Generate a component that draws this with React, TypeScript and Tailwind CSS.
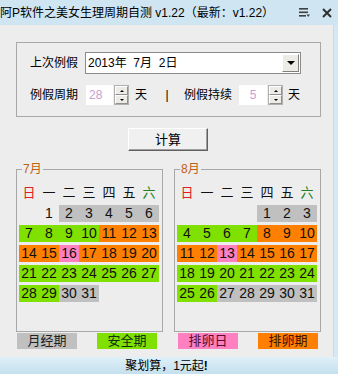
import React from "react";

type C = "" | "g" | "s" | "p" | "o";
const bg: Record<C, string> = {
  "": "",
  g: "bg-[#c0c0c0]",
  s: "bg-[#80e000]",
  p: "bg-[#ff80c0]",
  o: "bg-[#ff8000]",
};

function colorJuly(d: number): C {
  if (d === 1) return "";
  if (d <= 6) return "g";
  if (d <= 10) return "s";
  if (d === 16) return "p";
  if (d <= 20) return "o";
  if (d <= 29) return "s";
  return "g";
}
function colorAug(d: number): C {
  if (d <= 3) return "g";
  if (d <= 7) return "s";
  if (d === 13) return "p";
  if (d <= 17) return "o";
  if (d <= 26) return "s";
  return "g";
}

const week = ["日", "一", "二", "三", "四", "五", "六"];

function Calendar({ title, start, colorFn }: { title: string; start: number; colorFn: (d: number) => C }) {
  const cells: { d: number | null; c: C }[] = [];
  for (let i = 0; i < start; i++) cells.push({ d: null, c: "" });
  for (let d = 1; d <= 31; d++) cells.push({ d, c: colorFn(d) });
  return (
    <div className="relative w-[147px] h-[163px] border border-[#a8a8a8] pl-[2px] pt-[15px]">
      <span className="absolute left-[5px] top-[-8px] px-[1px] bg-[#ededed] text-[12px] leading-[14px] text-[#c06010]">
        {title}
      </span>
      <div className="grid grid-cols-[repeat(7,20px)] h-[16px] items-center text-[13px] leading-[16px]">
        {week.map((w, i) => (
          <div
            key={w}
            className={
              "text-center " + (i === 0 ? "text-[#e02020]" : i === 6 ? "text-[#208020]" : "text-[#101010]")
            }
          >
            {w}
          </div>
        ))}
      </div>
      <div className="mt-[4px] grid grid-cols-[repeat(7,20px)] auto-rows-[17px] gap-y-[3px] text-[14px] leading-[17px] text-[#101010]">
        {cells.map((c, i) => (
          <div key={i} className={"text-center " + bg[c.c]}>
            {c.d ?? ""}
          </div>
        ))}
      </div>
    </div>
  );
}

function Spinner() {
  return (
    <div className="flex flex-col w-[15px] h-[20px] border border-[#b0b0b0]">
      <div className="flex-1 flex items-center justify-center bg-[#ecebe6] border-t border-l border-t-white border-l-white border-b border-r border-b-[#909090] border-r-[#909090]">
        <div className="w-0 h-0 border-l-[2px] border-r-[2px] border-b-[2px] border-l-transparent border-r-transparent border-b-black" />
      </div>
      <div className="flex-1 flex items-center justify-center bg-[#ecebe6] border-t border-l border-t-white border-l-white border-b border-r border-b-[#909090] border-r-[#909090]">
        <div className="w-0 h-0 border-l-[2px] border-r-[2px] border-t-[2px] border-l-transparent border-r-transparent border-t-black" />
      </div>
    </div>
  );
}

export default function App() {
  return (
    <div className="w-[338px] h-[374px] bg-[#ededed] flex flex-col overflow-hidden font-['Liberation_Sans','Noto_Sans_CJK_SC',sans-serif] text-black">
      {/* Title bar */}
      <div className="h-[25px] bg-[#cfe5f2] flex items-center text-[12px] leading-[14px] shrink-0">
        <span className="whitespace-pre">阿P软件之美女生理周期自测 v1.22（最新：v1.22）</span>
        <div className="ml-auto flex items-center">
          <svg width="11" height="9" viewBox="0 0 11 9" className="mr-[12px]">
            <rect x="0" y="0" width="9" height="1.6" fill="#404040" />
            <rect x="0" y="3.5" width="9" height="1.6" fill="#404040" />
            <rect x="0" y="7" width="7" height="1.6" fill="#404040" />
            <path d="M7.5 6.5 L11 6.5 L9.25 9 Z" fill="#404040" />
          </svg>
          <svg width="10" height="10" viewBox="0 0 10 10" className="mr-[6px]">
            <path d="M1 1 L9 9 M9 1 L1 9" stroke="#303030" strokeWidth="2" />
          </svg>
        </div>
      </div>

      <div className="flex flex-1">
        <div className="w-[333px] flex flex-col">
          {/* Settings box */}
          <div className="ml-[16px] mt-[17px] w-[305px] h-[75px] border border-[#a8a8a8] pl-[13px] pt-[9px] text-[12px]">
            <div className="flex items-center h-[22px]">
              <span className="w-[48px]">上次例假</span>
              <div className="ml-[7px] w-[216px] h-[22px] bg-white border border-[#8a8a8a] flex items-center">
                <span className="pl-[2px] whitespace-pre">2013年  7月  2日</span>
                <div className="ml-auto mr-[1px] w-[17px] h-[18px] bg-[#ecebe6] border border-t-white border-l-white border-b-[#808080] border-r-[#808080] flex items-center justify-center">
                  <div className="w-0 h-0 border-l-[4px] border-r-[4px] border-t-[4px] border-l-transparent border-r-transparent border-t-black" />
                </div>
              </div>
            </div>
            <div className="flex items-center h-[20px] mt-[11px]">
              <span className="w-[48px]">例假周期</span>
              <div className="ml-[8px] w-[27px] h-[20px] bg-white flex items-center pl-[3px] text-[#c8a0d0]">28</div>
              <div className="ml-[1px]">
                <Spinner />
              </div>
              <span className="ml-[6px]">天</span>
              <span className="ml-[18px] w-[4px] text-center">|</span>
              <span className="ml-[15px] w-[48px]">例假持续</span>
              <div className="ml-[7px] w-[28px] h-[20px] bg-white flex items-center justify-center text-[#c8a0d0]">5</div>
              <div className="ml-[1px]">
                <Spinner />
              </div>
              <span className="ml-[5px]">天</span>
            </div>
          </div>

          {/* Button */}
          <div className="ml-[128px] mt-[11px] w-[80px] h-[23px] bg-[#f0f0f0] border border-t-white border-l-white border-b-[#606060] border-r-[#606060] shadow-[inset_-1px_-1px_0_#a0a0a0] flex items-center justify-center text-[13px]">
            计算
          </div>

          {/* Calendars */}
          <div className="flex ml-[16px] mt-[18px] gap-[11px]">
            <Calendar title="7月" start={1} colorFn={colorJuly} />
            <Calendar title="8月" start={4} colorFn={colorAug} />
          </div>

          {/* Legend */}
          <div className="flex mt-[1px] h-[16px] text-[13px] leading-[16px]">
            <div className="ml-[17px] w-[60px] bg-[#c0c0c0] text-center text-[#202020]">月经期</div>
            <div className="ml-[20px] w-[60px] bg-[#80e000] text-center text-[#103010]">安全期</div>
            <div className="ml-[21px] w-[60px] bg-[#ff80c0] text-center text-[#501030]">排卵日</div>
            <div className="ml-[20px] w-[60px] bg-[#ff8000] text-center text-[#401000]">排卵期</div>
          </div>
        </div>
        <div className="w-[5px] bg-[#d4e9f5] border-l border-[#c4dce9]" />
      </div>

      {/* Status bar */}
      <div className="h-[17px] shrink-0 bg-gradient-to-b from-[#dff0f8] to-[#c4e0ee] flex items-center justify-center pr-[5px] text-[12px]">
        聚划算，1元起<b>!</b>
      </div>
    </div>
  );
}
